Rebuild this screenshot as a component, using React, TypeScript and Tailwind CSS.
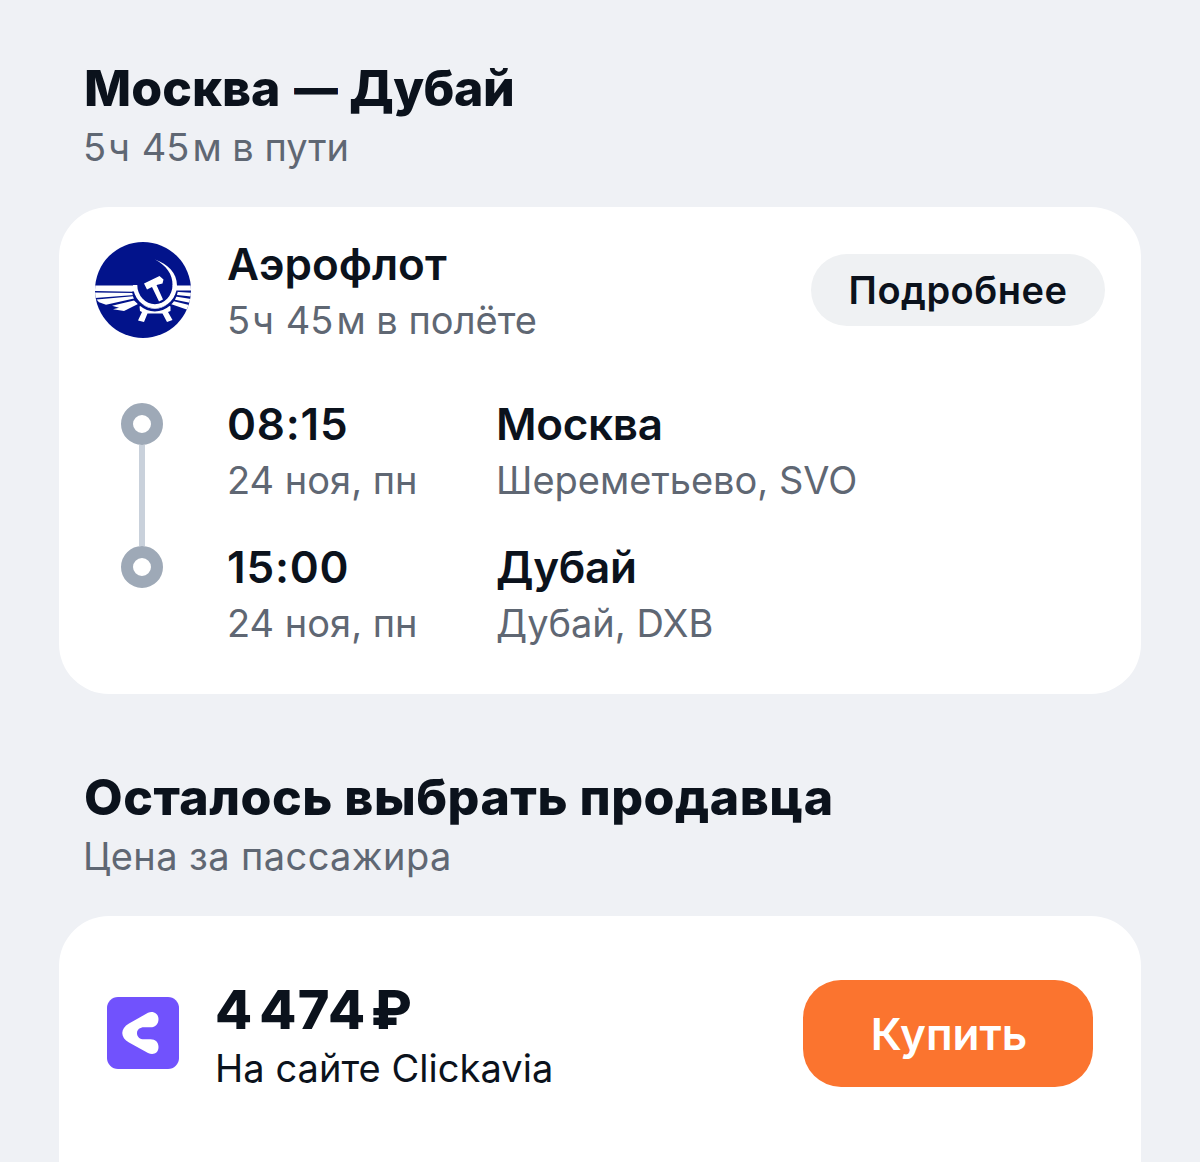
import type { ReactNode } from 'react';

interface Stop {
  time: string;
  date: string;
  city: string;
  airport: string;
}

const stops: Stop[] = [
  { time: '08:15', date: '24 ноя, пн', city: 'Москва', airport: 'Шереметьево, SVO' },
  { time: '15:00', date: '24 ноя, пн', city: 'Дубай', airport: 'Дубай, DXB' },
];

function AeroflotLogo() {
  return (
    <svg className="w-24 h-24 -mt-[4px] shrink-0" viewBox="0 0 96 96">
      <defs>
        <clipPath id="disc">
          <circle cx="48" cy="48" r="48" />
        </clipPath>
      </defs>
      <g clipPath="url(#disc)">
        <rect width="96" height="96" fill="#02138b" />
        {/* left wing */}
        <path d="M0 43.5H41L42 52L38 49.8L0 49Z" fill="#fff" />
        <path d="M0 50.5L38 50.9L39.500 53L0 55.9Z" fill="#fff" />
        <path d="M1.500 57.500L38 54.3L39 56.500L11 62.800L4 60.3Z" fill="#fff" />
        <path d="M17 63.800L39 58.500L43 62L29 69L18 67.300L24 65.800Z" fill="#fff" />
        {/* right wing */}
        <path d="M79 43.5H96V48.6H79Z" fill="#fff" />
        <path d="M80 49.800L96 50.700V54.500L79.500 52.800Z" fill="#fff" />
        <path d="M79 54.300L96 57V61L77.500 57.200Z" fill="#fff" />
        <path d="M77 58.700L96 63.500V69L75 61.800Z" fill="#fff" />
        {/* base with two legs */}
        <path
          d="M44.500 64.500L48 62.500Q60 70 72 62.500L75.500 64.500V69L73 70L77.500 78L72 80L67.500 71.500H52.500L49 80L43 78.500L47 70L45 69Z"
          fill="#fff"
        />
        {/* ring */}
        <path d="M38.200 49.500A22 22.600 0 0 0 81.500 49.500" stroke="#02138b" strokeWidth="2.6" fill="none" />
        <path d="M38 43H42.300A17.600 19.200 0 0 0 77.500 43H82A22 23.400 0 0 1 38 43Z" fill="#fff" />
        {/* sickle */}
        <path d="M60 17.500C73 22 82 31 82 43.500H77.500C78 32 71 23.500 60 17.500Z" fill="#fff" />
        {/* hammer */}
        <path d="M49 41.500L64.500 34L68.500 37.500L67.500 41.500L61.500 43L68 57.500L64 59.500L57 45L52 47.500Z" fill="#fff" />
      </g>
    </svg>
  );
}

function ClickaviaLogo() {
  return (
    <svg className="w-[72px] h-[72px] shrink-0" viewBox="0 0 72 72">
      <rect width="72" height="72" rx="11" fill="#7152fd" />
      <path
        d="M41 15.800C46.500 13.500 51.500 17 51.500 22C51.500 27 48.500 30.300 43.500 30.300H37C33 30.300 30 32.500 30 36.200C30 40 33 42.300 37 42.300H43.500C48.500 42.300 51.500 45.300 51.500 50C51.500 56 46.500 58.500 41 56L22 45.500C13 40.500 13 31.500 22 26.500Z"
        fill="#fff"
      />
    </svg>
  );
}

function SectionTitle({ title, subtitle }: { title: ReactNode; subtitle: ReactNode }) {
  return (
    <div className="pl-[25px]">
      <h2 className="text-[50px] leading-[60px] font-extrabold">{title}</h2>
      <div className="-ml-px text-[38px] leading-[59px] text-[#5f6773]">{subtitle}</div>
    </div>
  );
}

function Duration({ suffix }: { suffix: string }) {
  return (
    <p>
      5<span className="ml-[2px]">ч</span> <span className="ml-px">45</span>
      <span className="ml-[3px]">м</span> {suffix}
    </p>
  );
}

function RouteLine() {
  return (
    <div className="w-[42px] flex flex-col items-center pt-[7px]">
      <span className="w-[42px] h-[42px] rounded-full border-[12px] border-[#9ea9b7]" />
      <span className="w-[6px] h-[101px] bg-[#c9d1db]" />
      <span className="w-[42px] h-[42px] rounded-full border-[12px] border-[#9ea9b7]" />
    </div>
  );
}

export default function App() {
  return (
    <div className="h-[1162px] overflow-hidden bg-[#eff1f5] px-[59px] pt-[58px] font-['Inter',sans-serif] text-[#0b121c] whitespace-nowrap">
      <SectionTitle
        title={
          <>
            Москва <span className="inline-block scale-x-[0.88] -mr-[3px]">—</span>{' '}
            <span className="tracking-[-0.5px]">Дубай</span>
          </>
        }
        subtitle={<Duration suffix="в пути" />}
      />

      <div className="mt-[30px] h-[487px] w-[1082px] rounded-[50px] bg-white pt-[29px] pl-9 pr-9">
        <div className="flex items-center">
          <AeroflotLogo />
          <div className="ml-[36px] flex-1">
            <h3 className="text-[44px] leading-[56px] font-semibold">Аэрофлот</h3>
            <div className="text-[38px] leading-[56px] text-[#5f6773]">
              <Duration suffix="в полёте" />
            </div>
          </div>
          <button className="w-[294px] h-[72px] -mt-1 rounded-full bg-[#eff1f3] text-[38px] font-semibold tracking-[0.5px]">
            Подробнее
          </button>
        </div>

        <div className="mt-[48px] pl-[26px] flex">
          <RouteLine />
          <div className="ml-[64px] flex flex-col gap-[31px]">
            {stops.map((stop) => (
              <div key={stop.time} className="flex">
                <div className="w-[269px]">
                  <p className="text-[44px] leading-[56px] font-semibold tracking-[0.8px]">{stop.time}</p>
                  <p className="text-[38px] leading-[56px] text-[#5f6773]">{stop.date}</p>
                </div>
                <div>
                  <p className="text-[44px] leading-[56px] font-semibold tracking-[-0.3px]">{stop.city}</p>
                  <p className="text-[38px] leading-[56px] text-[#5f6773]">{stop.airport}</p>
                </div>
              </div>
            ))}
          </div>
        </div>
      </div>

      <div className="mt-[73px]">
        <SectionTitle
          title={<span className="tracking-[0.5px]">Осталось выбрать продавца</span>}
          subtitle={<span className="tracking-[0.4px]">Цена за пассажира</span>}
        />
      </div>

      <div className="mt-[30px] h-[300px] w-[1082px] rounded-t-[50px] bg-white pt-16 pl-12 pr-12 flex items-start">
        <div className="mt-[17px]">
          <ClickaviaLogo />
        </div>
        <div className="ml-[36px] flex-1">
          <p className="flex text-[54px] leading-[59px] font-extrabold">
            <span>4</span>
            <span className="ml-[7px] tracking-[1.5px]">474</span>
            <span className="ml-[4px]">₽</span>
          </p>
          <p className="text-[38px] leading-[58px] tracking-[0.05px]">На сайте Clickavia</p>
        </div>
        <button className="w-[290px] h-[107px] rounded-[38px] bg-[#fb742f] pl-[2px] text-[44px] font-semibold text-white">
          Купить
        </button>
      </div>
    </div>
  );
}
